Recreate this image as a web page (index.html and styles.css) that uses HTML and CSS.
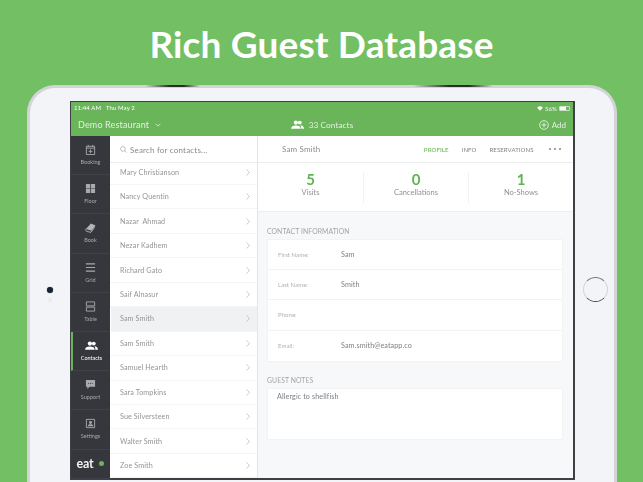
FILE: index.html
```html
<!DOCTYPE html>
<html lang="en">
<head>
<meta charset="utf-8">
<title>Rich Guest Database</title>
<link rel="stylesheet" href="styles.css">
</head>
<body>
<h1 class="headline">Rich Guest Database</h1>
<div class="tablet">
  <span class="shine shine-left"></span>
  <span class="shine shine-right"></span>
  <div class="camera"></div>
  <div class="home"></div>
  <div class="screen">
    <header class="topbar">
      <div class="status">
        <span>11:44 AM&nbsp;&nbsp; Thu May 2</span>
        <span class="status-right">
          <svg class="wifi" viewBox="0 0 12 9"><path d="M6 8.8 0.3 3a8.2 8.2 0 0 1 11.4 0z" fill="#fff"/></svg>
          56%
          <span class="battery"><span class="battery-fill"></span></span>
        </span>
      </div>
      <div class="nav">
        <div class="nav-left">Demo Restaurant
          <svg class="caret" viewBox="0 0 8 5"><path d="M.7.7 4 4l3.3-3.3" fill="none" stroke="#e6f3e2" stroke-width="1"/></svg>
        </div>
        <div class="nav-center">
          <svg class="people" viewBox="0 0 20 14"><use href="#people-shape"/></svg>
          33 Contacts
        </div>
        <div class="nav-right">
          <svg class="plus" viewBox="0 0 12 12"><circle cx="6" cy="6" r="5.2" fill="none" stroke="#fff" stroke-width=".9"/><path d="M6 3v6M3 6h6" stroke="#fff" stroke-width=".9"/></svg>
          Add
        </div>
      </div>
    </header>
    <div class="body">
      <nav class="rail">
        <a class="rail-item">
          <svg viewBox="0 0 12 12"><path d="M1.5 2.5h9v9h-9zM1.5 4.5h9" fill="none" stroke="#a8a9ac"/><path d="M3.5 1v2M8.5 1v2M6 6v4M4 8h4" stroke="#a8a9ac"/></svg>
          Booking</a>
        <a class="rail-item">
          <svg viewBox="0 0 12 12"><path d="M1 1h4.6v4.6H1zM6.4 1H11v4.6H6.4zM1 6.4h4.6V11H1zM6.4 6.4H11V11H6.4z" fill="#a8a9ac"/></svg>
          Floor</a>
        <a class="rail-item">
          <svg viewBox="0 0 12 12"><path d="M1 7.5 6.5 1.5l5 2.2L7 9.5z" fill="#b4b5b7"/><path d="M1 7.5c-.5 1.300-.2 2.300 1 2.800l4.500 1 4-5.500" fill="none" stroke="#b4b5b7"/></svg>
          Book</a>
        <a class="rail-item">
          <svg viewBox="0 0 12 12"><path d="M1 2h10M1 6h10M1 10h10" stroke="#a8a9ac" stroke-width="1.200"/></svg>
          Grid</a>
        <a class="rail-item">
          <svg viewBox="0 0 12 12"><path d="M1.500 1h9v4.300h-9zM1.500 6.700h9V11h-9z" fill="none" stroke="#a8a9ac"/></svg>
          Table</a>
        <a class="rail-item rail-active">
          <svg viewBox="0 0 20 14"><defs><g id="people-shape" fill="#fff"><circle cx="7.500" cy="4" r="3.300"/><path d="M0 13.500c0-3.500 3-5 7.500-5s7.500 1.500 7.500 5z"/><circle cx="13.500" cy="4" r="3"/><path d="M14.500 8.200c3.500.2 5.500 1.800 5.500 5.300h-4c0-2-.3-3.800-1.500-5.300z"/></g></defs><use href="#people-shape"/></svg>
          Contacts</a>
        <a class="rail-item">
          <svg viewBox="0 0 12 12"><path d="M1 1h10v7.500H5L2.500 11V8.500H1z" fill="#a8a9ac"/><path d="M3.500 4.800h1M5.500 4.800h1M7.500 4.800h1" stroke="#36373c"/></svg>
          Support</a>
        <a class="rail-item">
          <svg viewBox="0 0 12 12"><path d="M1.500 1.500h9v9h-9z" fill="none" stroke="#a8a9ac"/><circle cx="6" cy="5" r="1.600" fill="#a8a9ac"/><path d="M3 9c0-1.500 1.200-2.200 3-2.200S9 7.500 9 9z" fill="#a8a9ac"/></svg>
          Settings</a>
        <div class="rail-brand"><span class="brand-word">eat</span><span class="brand-dot"></span></div>
      </nav>
      <section class="contacts">
        <div class="search">
          <svg class="search-icon" viewBox="0 0 10 10"><circle cx="4.200" cy="4.200" r="3.400" fill="none" stroke="#8f9092" stroke-width=".8"/><path d="m6.700 6.700 2.700 2.700" stroke="#8f9092" stroke-width=".8"/></svg>
          Search for contacts...
        </div>
        <ul class="contact-list">
          <li class="contact contact-first">Mary Christianson<svg class="chev" viewBox="0 0 5 9"><path d="m.6.6 3.800 3.900L.6 8.400"/></svg></li>
          <li class="contact">Nancy Quentin<svg class="chev" viewBox="0 0 5 9"><path d="m.6.6 3.800 3.900L.6 8.400"/></svg></li>
          <li class="contact">Nazar&nbsp; Ahmad<svg class="chev" viewBox="0 0 5 9"><path d="m.6.6 3.800 3.900L.6 8.400"/></svg></li>
          <li class="contact">Nezar Kadhem<svg class="chev" viewBox="0 0 5 9"><path d="m.6.6 3.800 3.900L.6 8.400"/></svg></li>
          <li class="contact">Richard Gato<svg class="chev" viewBox="0 0 5 9"><path d="m.6.6 3.800 3.900L.6 8.400"/></svg></li>
          <li class="contact">Saif Alnasur<svg class="chev" viewBox="0 0 5 9"><path d="m.6.6 3.800 3.900L.6 8.400"/></svg></li>
          <li class="contact contact-selected">Sam Smith<svg class="chev" viewBox="0 0 5 9"><path d="m.6.6 3.800 3.900L.6 8.400"/></svg></li>
          <li class="contact">Sam Smith<svg class="chev" viewBox="0 0 5 9"><path d="m.6.6 3.800 3.900L.6 8.400"/></svg></li>
          <li class="contact">Samuel Hearth<svg class="chev" viewBox="0 0 5 9"><path d="m.6.6 3.800 3.900L.6 8.400"/></svg></li>
          <li class="contact">Sara Tompkins<svg class="chev" viewBox="0 0 5 9"><path d="m.6.6 3.800 3.900L.6 8.400"/></svg></li>
          <li class="contact">Sue Silversteen<svg class="chev" viewBox="0 0 5 9"><path d="m.6.6 3.800 3.900L.6 8.400"/></svg></li>
          <li class="contact">Walter Smith<svg class="chev" viewBox="0 0 5 9"><path d="m.6.6 3.800 3.900L.6 8.400"/></svg></li>
          <li class="contact">Zoe Smith<svg class="chev" viewBox="0 0 5 9"><path d="m.6.6 3.800 3.900L.6 8.400"/></svg></li>
        </ul>
      </section>
      <main class="detail">
        <div class="detail-head">
          <span class="detail-name">Sam Smith</span>
          <div class="tabs">
            <span class="tab tab-active">PROFILE</span>
            <span class="tab">INFO</span>
            <span class="tab">RESERVATIONS</span>
            <span class="more"><i></i><i></i><i></i></span>
          </div>
        </div>
        <div class="stats">
          <div class="stat"><b>5</b><span>Visits</span></div>
          <div class="stat"><b>0</b><span>Cancellations</span></div>
          <div class="stat"><b>1</b><span>No-Shows</span></div>
        </div>
        <div class="panels">
          <h2 class="section-title">CONTACT INFORMATION</h2>
          <div class="card">
            <div class="field"><label>First Name:</label><span>Sam</span></div>
            <div class="field"><label>Last Name:</label><span>Smith</span></div>
            <div class="field"><label>Phone:</label><span></span></div>
            <div class="field"><label>Email:</label><span>Sam.smith@eatapp.co</span></div>
          </div>
          <h2 class="section-title section-notes">GUEST NOTES</h2>
          <div class="card notes">Allergic to shellfish</div>
        </div>
      </main>
    </div>
  </div>
</div>
</body>
</html>
```
FILE: styles.css
```css
* { box-sizing: border-box; }
html, body { height: 100%; }
body {
  margin: 0;
  overflow: hidden;
  background: #72bf64;
  font-family: Lato, "Open Sans", sans-serif;
  color: #77787b;
}
.headline {
  margin: 0;
  height: 85px;
  padding-top: 21px;
  text-align: center;
  font-size: 37px;
  line-height: 45px;
  font-weight: 700;
  letter-spacing: .15px;
  color: #fff;
}
.tablet {
  position: relative;
  width: 590px;
  height: 420px;
  margin-left: 27px;
  padding: 13px 0 0 40px;
  background: #f3f4f7;
  border: 3px solid #d3d4d8;
  border-bottom: 0;
  border-radius: 28px 28px 0 0;
}
.shine {
  position: absolute;
  top: -3px;
  height: 1.500px;
  background: linear-gradient(90deg, rgba(40,40,40,0), #2b2b2b 45%, #2b2b2b 70%, rgba(40,40,40,0));
}
.shine-left { left: 115px; width: 55px; }
.shine-right { left: 383px; width: 80px; }
.camera {
  position: absolute;
  left: 17px;
  top: 199px;
  width: 6px;
  height: 6px;
  border-radius: 50%;
  background: #1b2136;
  box-shadow: 0 0 1px #555, 0 10px 0 -1px #e9eaed;
}
.home {
  position: absolute;
  left: 553px;
  top: 189px;
  width: 25px;
  height: 25px;
  border-radius: 50%;
  border: 1px solid #d2d3d6;
  border-top-color: #77787c;
  border-bottom-color: #4d4e52;
}
.screen {
  width: 505px;
  height: 379px;
  display: flex;
  flex-direction: column;
  border: 1px solid #3f4045;
  border-width: 1px 2px 2px 1px;
  background: #fff;
  filter: blur(.25px);
}
.topbar {
  height: 34px;
  flex: none;
  background: #6ab45a;
  color: #fff;
}
.status {
  height: 11px;
  padding: 1px 3px 0 3px;
  display: flex;
  justify-content: space-between;
  font-size: 6px;
  line-height: 9px;
  letter-spacing: .1px;
}
.status-right { display: flex; align-items: center; gap: 2px; opacity: .95; }
.wifi { width: 6px; height: 5px; }
.battery {
  width: 11px;
  height: 5px;
  border: .5px solid #cfe6c9;
  border-radius: 1px;
}
.battery-fill { display: block; width: 6px; height: 100%; background: #fff; }
.nav {
  height: 23px;
  padding: 0 7px;
  display: grid;
  grid-template-columns: 1fr 1fr 1fr;
  align-items: center;
  font-size: 8.500px;
  color: #e4f1e0;
}
.nav-left { font-size: 9px; letter-spacing: .15px; display: flex; align-items: center; gap: 6px; }
.nav-center {
  display: flex;
  align-items: center;
  justify-content: center;
  gap: 5px;
  font-size: 8.200px;
  letter-spacing: .1px;
}
.nav-right { display: flex; justify-content: flex-end; align-items: center; gap: 3px; font-size: 8px; }
.caret { width: 6px; height: 4px; }
.people { width: 13px; height: 9px; }
.plus { width: 10px; height: 10px; }
.body { flex: 1; min-height: 0; display: flex; }
.rail {
  width: 39px;
  flex: none;
  display: flex;
  flex-direction: column;
  background: #36373c;
}
.rail-item {
  height: 39.200px;
  flex: none;
  display: flex;
  flex-direction: column;
  align-items: center;
  padding-top: 8px;
  gap: 3px;
  font-size: 5.500px;
  line-height: 8px;
  color: #a8a9ac;
  border-bottom: 1px solid #414247;
}
.rail-item svg { width: 11px; height: 11px; flex: none; }
.rail-active {
  color: #fff;
  border-left: 2px solid #6ab45a;
}
.rail-active svg { width: 13px; height: 9px; margin-top: 1px; margin-bottom: 1px; }
.rail-brand {
  flex: 1;
  display: flex;
  align-items: center;
  justify-content: center;
  gap: 6px;
}
.brand-word { font-size: 12.500px; font-weight: 700; color: #f2f2f2; letter-spacing: -.2px; }
.brand-dot { width: 5px; height: 5px; border-radius: 50%; background: #6ab45a; }
.contacts {
  width: 148px;
  flex: none;
  display: flex;
  flex-direction: column;
  border-right: 1px solid #e4e5e7;
  min-height: 0;
  overflow: hidden;
}
.search {
  height: 27px;
  flex: none;
  padding: 1px 0 0 10px;
  display: flex;
  align-items: center;
  gap: 3px;
  font-size: 8px;
  letter-spacing: .2px;
  color: #88898c;
  border-bottom: 1px solid #eceded;
}
.search-icon { width: 7px; height: 7px; }
.contact-list { list-style: none; margin: 0; padding: 0; }
.contact {
  height: 24.450px;
  padding: 0 7px 0 10px;
  display: flex;
  justify-content: space-between;
  align-items: center;
  font-size: 7.200px;
  letter-spacing: .1px;
  color: #949597;
  border-bottom: 1px solid #f3f4f5;
}
.contact-first { height: 22px; padding-bottom: 3px; }
.contact-selected { background: #f0f1f2; margin-left: 1px; padding-left: 9px; }
.chev { width: 4px; height: 7px; fill: none; stroke: #a9aaac; stroke-width: .8; }
.detail {
  flex: 1;
  min-width: 0;
  display: flex;
  flex-direction: column;
  background: #f7f8fa;
}
.detail-head {
  height: 27px;
  flex: none;
  padding: 0 12px 0 24px;
  display: flex;
  justify-content: space-between;
  align-items: center;
  background: #fff;
  border-bottom: 1px solid #eceded;
}
.detail-name { font-size: 8px; letter-spacing: .15px; color: #8b8c8f; }
.tabs { display: flex; align-items: center; gap: 13px; }
.tab { font-size: 6px; letter-spacing: .1px; color: #838487; }
.tab-active { color: #86c46f; font-weight: 700; }
.more { display: flex; gap: 2.500px; margin-left: 2px; }
.more i { width: 2.500px; height: 2.500px; border-radius: 50%; background: #838487; }
.stats {
  height: 49px;
  flex: none;
  display: grid;
  grid-template-columns: repeat(3, 1fr);
  align-items: center;
  background: #fff;
  border-bottom: 1px solid #ecedee;
}
.stat {
  height: 31px;
  display: flex;
  flex-direction: column;
  align-items: center;
  text-align: center;
  border-left: 1px solid #f1f2f3;
}
.stat:first-child { border-left: 0; }
.stat b { font-size: 15px; line-height: 15px; color: #62b352; font-weight: 700; }
.stat span { margin-top: -1px; font-size: 7.500px; line-height: 13px; color: #909194; }
.panels { padding: 14px 10px 0 9px; flex: 1; }
.section-title {
  margin: 0;
  font-size: 6.800px;
  line-height: 10px;
  font-weight: 400;
  letter-spacing: .1px;
  color: #a3a4a7;
}
.section-notes { margin-top: 13px; }
.card {
  margin-top: 3px;
  background: #fff;
  border: 1px solid #f2f3f4;
}
.field {
  height: 30.200px;
  padding-left: 10px;
  display: flex;
  align-items: center;
  border-bottom: 1px solid #f2f3f4;
}
.field:last-child { border-bottom: 0; }
.field label { width: 63px; font-size: 6px; color: #b0b1b3; letter-spacing: .05px; }
.field span { font-size: 7.200px; color: #7f8083; letter-spacing: .1px; }
.notes {
  height: 52px;
  padding: 2px 9px;
  font-size: 7.200px;
  line-height: 12px;
  letter-spacing: .1px;
  color: #7f8083;
}
```
